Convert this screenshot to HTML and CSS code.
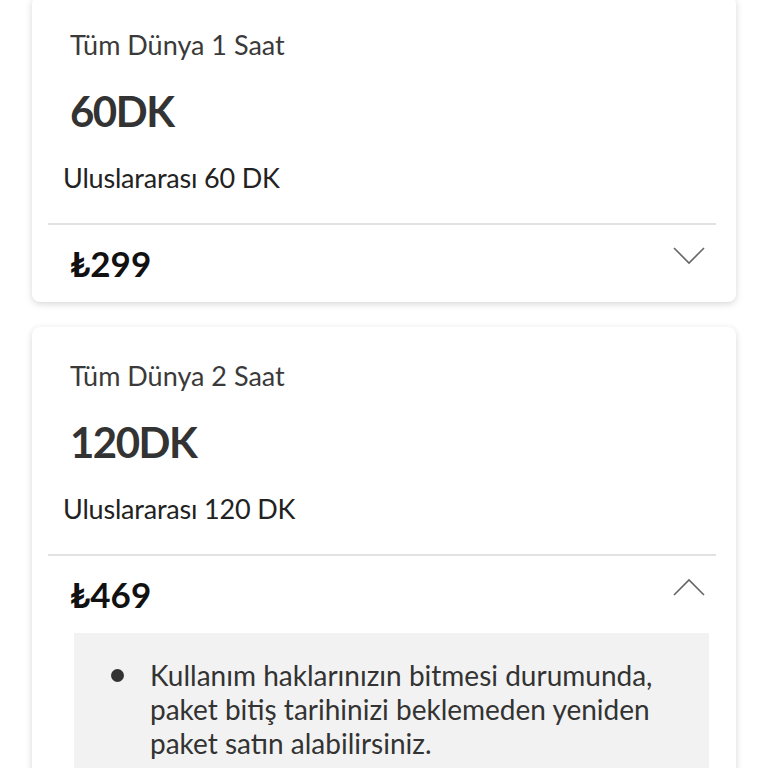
FILE: index.html
```html
<!DOCTYPE html>
<html lang="tr">
<head>
    <meta charset="UTF-8">
    <meta name="viewport" content="width=device-width, initial-scale=1.0">
    <title>Paketler</title>
    <link rel="stylesheet" href="styles.css">
</head>
<body>

    <div class="plans">

        <div class="card">
            <div class="card-body">
                <div class="plan-name">Tüm Dünya 1 Saat</div>
                <div class="plan-amount">60DK</div>
                <div class="plan-desc">Uluslararası 60 DK</div>
            </div>
            <div class="card-footer">
                <div class="price">₺299</div>
                <svg class="chevron" width="32" height="18" viewBox="0 0 32 18">
                    <polyline points="1,1 16,16 31,1" fill="none" stroke="#666" stroke-width="1.6"/>
                </svg>
            </div>
        </div>

        <div class="card">
            <div class="card-body">
                <div class="plan-name">Tüm Dünya 2 Saat</div>
                <div class="plan-amount">120DK</div>
                <div class="plan-desc">Uluslararası 120 DK</div>
            </div>
            <div class="card-footer">
                <div class="price">₺469</div>
                <svg class="chevron" width="32" height="18" viewBox="0 0 32 18">
                    <polyline points="1,17 16,2 31,17" fill="none" stroke="#666" stroke-width="1.6"/>
                </svg>
            </div>
            <div class="details">
                <ul>
                    <li>Kullanım haklarınızın bitmesi durumunda, paket bitiş tarihinizi beklemeden yeniden paket satın alabilirsiniz.</li>
                </ul>
            </div>
        </div>

    </div>

</body>
</html>
```

FILE: styles.css
```css
body {
    margin: 0;
    font-family: Lato, "Noto Sans", sans-serif;
    background-color: #fff;
    color: #333;
}

.plans {
    margin: -4px 32px 0;
}

.card {
    background-color: #fff;
    border-radius: 8px;
    box-shadow: 0 2px 7px rgba(0, 0, 0, 0.16);
    margin-bottom: 25px;
    overflow: hidden;
}

.card-body {
    margin: 0 20px 0 16px;
    padding: 33px 0 28px 22px;
    border-bottom: 2px solid #e2e2e2;
}

.plan-name {
    font-size: 27px;
    line-height: 31px;
    color: #3a3a3a;
}

.plan-amount {
    font-size: 42px;
    line-height: 53px;
    font-weight: bold;
    color: #333;
    margin-top: 25px;
    letter-spacing: -1.5px;
}

.plan-desc {
    font-size: 27px;
    line-height: 34px;
    color: #222;
    margin-top: 23px;
    margin-left: -7px;
    letter-spacing: -0.2px;
}

.card-footer {
    display: flex;
    justify-content: space-between;
    align-items: flex-start;
    padding: 18px 31px 18px 38px;
}

.price {
    font-size: 35px;
    line-height: 41px;
    font-weight: bold;
    color: #111;
}

.chevron {
    margin-top: 4px;
}

.details {
    background-color: #f2f2f2;
    margin: 0 27px 0 42px;
    padding: 25px 20px 30px 36px;
}

.details ul {
    margin: 0;
    padding-left: 40px;
    list-style: none;
}

.details li {
    position: relative;
    font-size: 28px;
    line-height: 34px;
    color: #333;
}

.details li::before {
    content: "";
    position: absolute;
    left: -39px;
    top: 11px;
    width: 13px;
    height: 13px;
    border-radius: 50%;
    background-color: #333;
}
```
